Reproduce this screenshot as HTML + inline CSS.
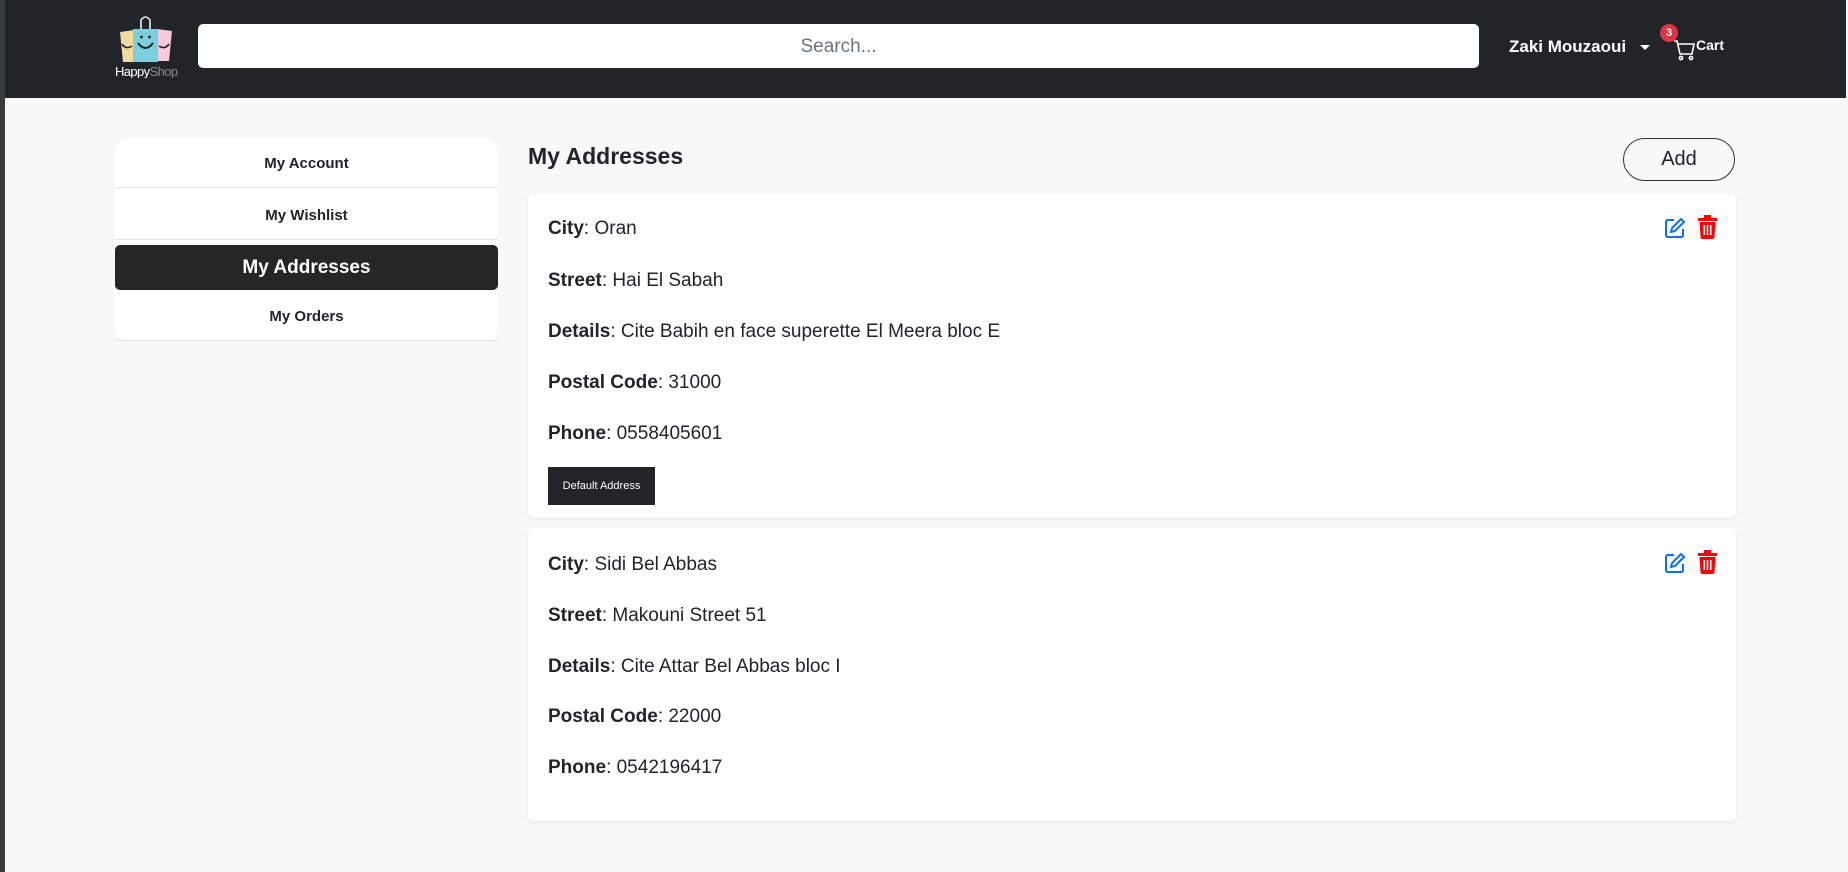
<!DOCTYPE html>
<html><head><meta charset="utf-8"><style>
*{box-sizing:border-box;margin:0;padding:0}
html,body{width:1848px;height:872px;overflow:hidden;background:#f8f8f8;font-family:"Liberation Sans",sans-serif;color:#212529;position:relative}
.lstrip{position:absolute;left:0;top:0;width:5px;height:872px;background:#3a3a3a}
.hdr{position:absolute;left:5px;top:0;width:1841px;height:98px;background:#212529}
.search{position:absolute;left:198px;top:24px;width:1281px;height:44px;background:#fff;border-radius:5px;text-align:center;line-height:46px;font-size:19px;color:#6c757d}
.name{position:absolute;left:1509px;top:37px;color:#fff;font-weight:bold;font-size:17px}
.caret{position:absolute;left:1640px;top:45px;width:0;height:0;border-left:5px solid transparent;border-right:5px solid transparent;border-top:5px solid #fff}
.badge{position:absolute;left:1660px;top:24px;width:18px;height:18px;border-radius:50%;background:#dc3545;color:#fff;font-size:11px;font-weight:bold;text-align:center;line-height:18px}
.cart{position:absolute;left:1696px;top:37px;color:#fff;font-weight:bold;font-size:14px}
.side{position:absolute;left:115px;top:138px;width:383px;height:204px;background:#fff;border-radius:14px}
.it{position:absolute;left:0;width:383px;text-align:center;font-weight:bold;font-size:15px;color:#212529;border-bottom:1px solid #e2e2e2}
.it.act{background:#262626;color:#fff;font-size:19px;border-radius:5px;border:none}
h2{position:absolute;left:528px;top:143px;font-size:23px;font-weight:bold}
.add{position:absolute;left:1623px;top:138px;width:112px;height:43px;border:1px solid #333;border-radius:22px;text-align:center;line-height:41px;font-size:20px}
.card{position:absolute;left:528px;width:1208px;background:#fff;border-radius:6px;box-shadow:0 1px 4px rgba(0,0,0,.08)}
.ln{position:absolute;left:20px;font-size:19px;line-height:22px}
.ln b{font-weight:bold}
.def{position:absolute;left:20px;top:274px;width:107px;height:38px;background:#212529;color:#fff;font-size:11px;text-align:center;line-height:38px}
.ic{position:absolute;top:24px}
</style></head><body>
<div class="lstrip"></div>
<div class="hdr"></div>
<svg style="position:absolute;left:114px;top:16px" width="64" height="62" viewBox="0 0 64 62">
<path d="M6 16 L20 14 L21 46 L9 46 Z" fill="#f0dca0"/>
<path d="M43 13 L58 15 L55 45 L43 45 Z" fill="#f7c9dc"/>
<path d="M19 13 H44 V46 H19 Z" fill="#7ccfe0"/>
<path d="M27 13 V4 Q31.5 -2 36 4 V13" fill="none" stroke="#eee" stroke-width="1.6"/>
<path d="M24 27 Q31.5 37 39 27" fill="none" stroke="#222" stroke-width="2"/>
<path d="M8 28 Q12 34 18 30" fill="none" stroke="#222" stroke-width="1.6"/>
<path d="M45 30 Q51 34 55 28" fill="none" stroke="#222" stroke-width="1.6"/>
<circle cx="27.5" cy="21" r="1.4" fill="#222"/><circle cx="35.5" cy="21" r="1.4" fill="#222"/>
<text x="1" y="60" font-family="Liberation Sans" font-size="13" fill="#fff" letter-spacing="-0.6">Happy<tspan fill="#888">Shop</tspan></text>
</svg>
<div class="search">Search...</div>
<div class="name">Zaki Mouzaoui</div><div class="caret"></div>
<svg style="position:absolute;left:1673px;top:38px" width="23" height="23" viewBox="0 0 23 23" fill="none" stroke="#fff" stroke-width="1.6"><path d="M1 3 H4 L7 16 H19 L21 6 H5"/><circle cx="8" cy="20" r="1.6"/><circle cx="18" cy="20" r="1.6"/></svg>
<div class="badge">3</div>
<div class="cart">Cart</div>
<div class="side">
<div class="it" style="top:0;height:50px;line-height:52px">My Account</div>
<div class="it" style="top:51px;height:51px;line-height:53px">My Wishlist</div>
<div class="it act" style="top:107px;height:45px;line-height:45px">My Addresses</div>
<div class="it" style="top:153px;height:50px;line-height:52px">My Orders</div>
</div>
<h2>My Addresses</h2>
<div class="add">Add</div>

<div class="card" style="top:193px;height:325px">
<svg class="ic" style="left:1136px" width="22" height="22" viewBox="0 0 22 22" fill="none" stroke="#0d6efd" stroke-width="2"><path d="M10 3 H4 Q2 3 2 5 V18 Q2 20 4 20 H17 Q19 20 19 18 V12"/><path d="M17 2 L20 5 L11 14 L7 15 L8 11 Z"/></svg>
<svg class="ic" style="left:1170px;top:22px" width="19" height="24" viewBox="0 0 19 24" fill="#f00"><rect x="0" y="3" width="19" height="3"/><rect x="6" y="0" width="7" height="3"/><path d="M1.5 7 H17.5 L16.5 22 Q16.3 24 14.5 24 H4.5 Q2.7 24 2.5 22 Z"/><rect x="5.5" y="10" width="1.6" height="10" fill="#fff"/><rect x="8.7" y="10" width="1.6" height="10" fill="#fff"/><rect x="11.9" y="10" width="1.6" height="10" fill="#fff"/></svg>
<div class="ln" style="top:25px"><b>City</b>: Oran</div>
<div class="ln" style="top:77px"><b>Street</b>: Hai El Sabah</div>
<div class="ln" style="top:128px"><b>Details</b>: Cite Babih en face superette El Meera bloc E</div>
<div class="ln" style="top:179px"><b>Postal Code</b>: 31000</div>
<div class="ln" style="top:230px"><b>Phone</b>: 0558405601</div>
<div class="def">Default Address</div>
</div>

<div class="card" style="top:528px;height:293px">
<svg class="ic" style="left:1136px" width="22" height="22" viewBox="0 0 22 22" fill="none" stroke="#0d6efd" stroke-width="2"><path d="M10 3 H4 Q2 3 2 5 V18 Q2 20 4 20 H17 Q19 20 19 18 V12"/><path d="M17 2 L20 5 L11 14 L7 15 L8 11 Z"/></svg>
<svg class="ic" style="left:1170px;top:22px" width="19" height="24" viewBox="0 0 19 24" fill="#f00"><rect x="0" y="3" width="19" height="3"/><rect x="6" y="0" width="7" height="3"/><path d="M1.5 7 H17.5 L16.5 22 Q16.3 24 14.5 24 H4.5 Q2.7 24 2.5 22 Z"/><rect x="5.5" y="10" width="1.6" height="10" fill="#fff"/><rect x="8.7" y="10" width="1.6" height="10" fill="#fff"/><rect x="11.9" y="10" width="1.6" height="10" fill="#fff"/></svg>
<div class="ln" style="top:26px"><b>City</b>: Sidi Bel Abbas</div>
<div class="ln" style="top:77px"><b>Street</b>: Makouni Street 51</div>
<div class="ln" style="top:128px"><b>Details</b>: Cite Attar Bel Abbas bloc I</div>
<div class="ln" style="top:178px"><b>Postal Code</b>: 22000</div>
<div class="ln" style="top:229px"><b>Phone</b>: 0542196417</div>
</div>
</body></html>
